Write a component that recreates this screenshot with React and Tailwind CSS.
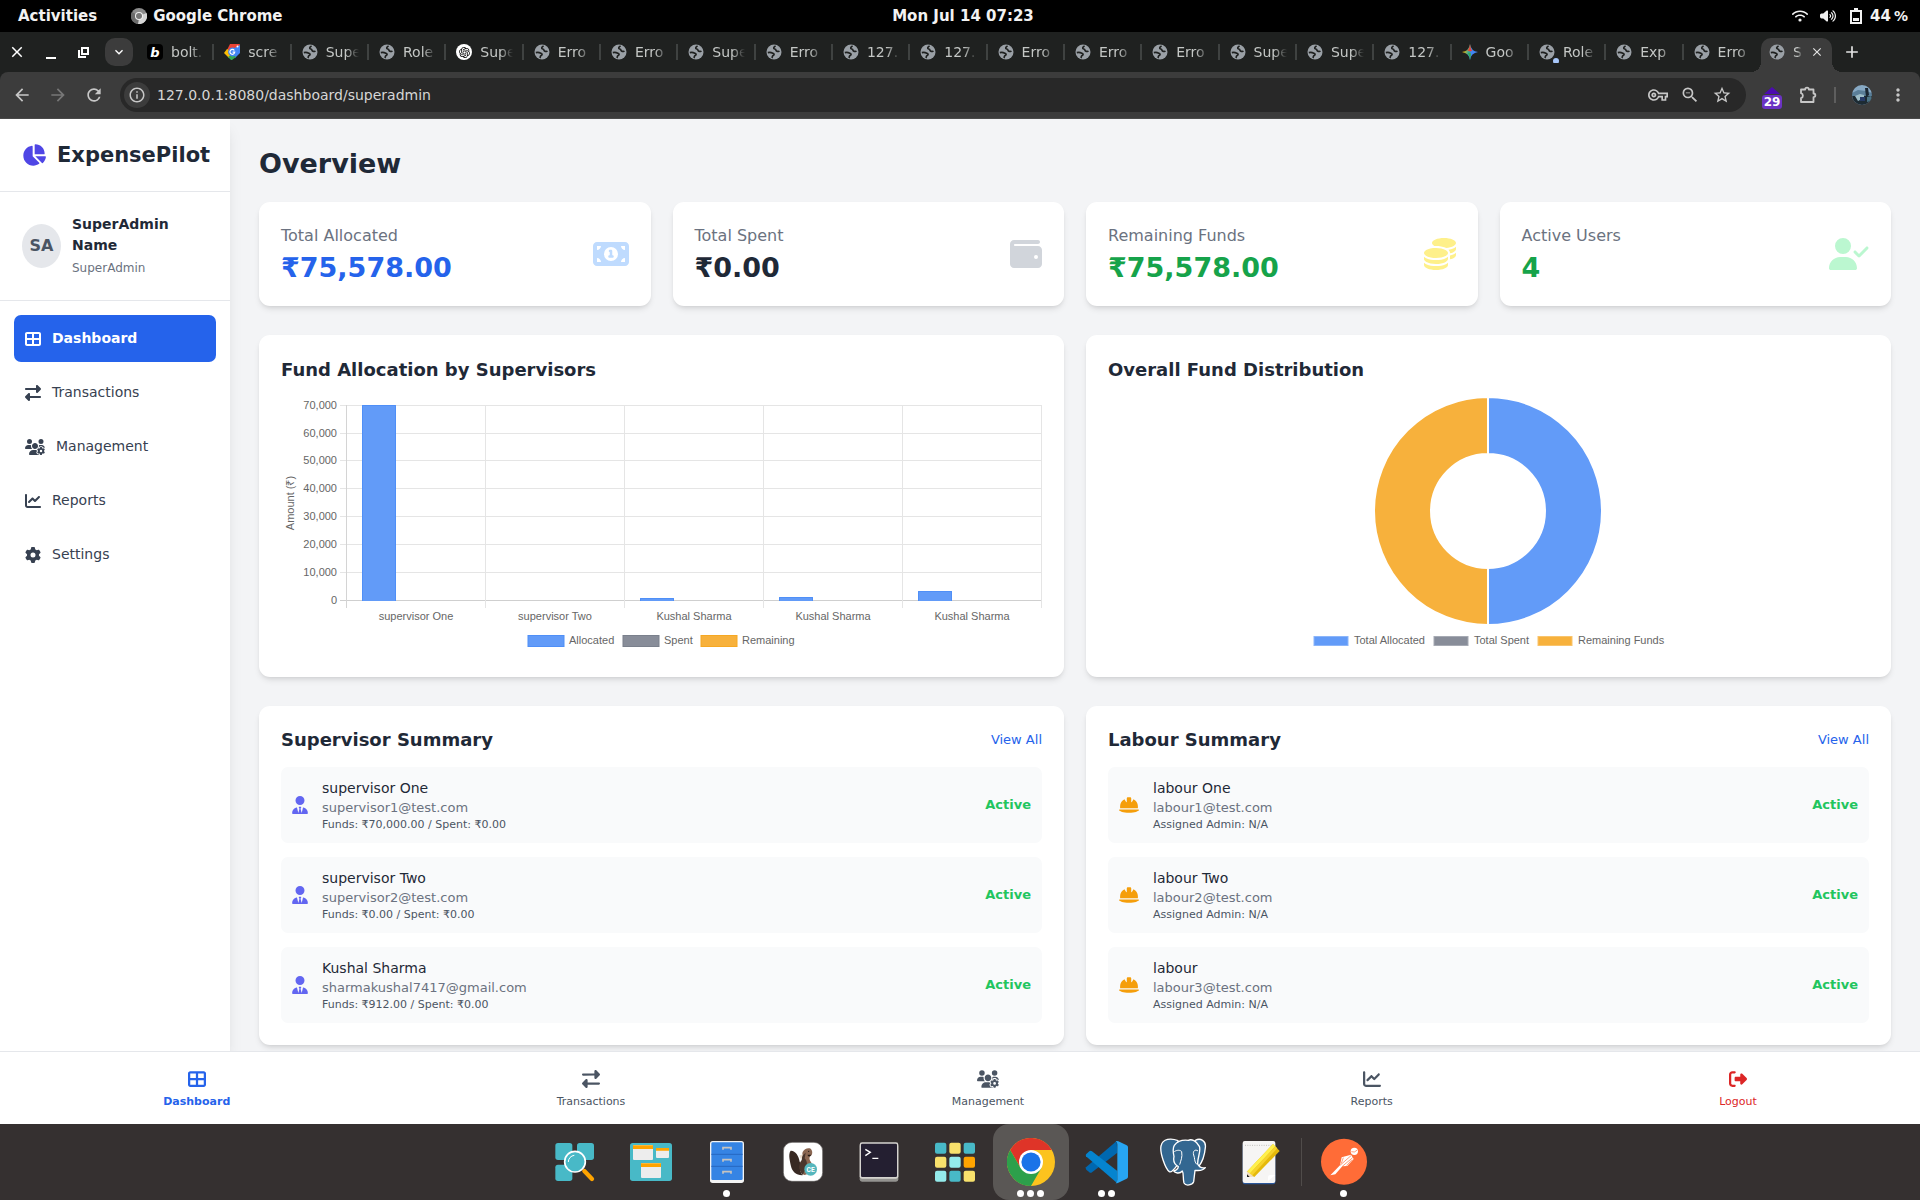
import React from "react";
import {
  FaChartLine,
  FaChartPie,
  FaCoins,
  FaGear,
  FaHelmetSafety,
  FaMoneyBill1,
  FaRightFromBracket,
  FaRightLeft,
  FaTableCellsLarge,
  FaUserCheck,
  FaUserTie,
  FaUsersGear,
  FaVolumeHigh,
  FaWallet,
  FaWifi,
} from "react-icons/fa6";
import {
  MdAdd,
  MdArrowBack,
  MdArrowForward,
  MdClose,
  MdExpandMore,
  MdMoreVert,
  MdOutlineInfo,
  MdOutlineVpnKey,
  MdRefresh,
  MdStarOutline,
  MdZoomOut,
} from "react-icons/md";
import { RiOpenaiFill } from "react-icons/ri";

/* ---------- Desktop top bar ---------- */

function TopBar() {
  return (
    <header className="grid h-8 shrink-0 grid-cols-3 items-center bg-black pl-[18px] pr-3 text-[15px] font-bold text-[#f2f2f2]">
      <div className="flex items-center gap-[34px]">
        <button>Activities</button>
        <button className="flex items-center gap-[6px]">
          <svg viewBox="0 0 16 16" className="size-4">
            <circle cx="8" cy="8" r="8" fill="#8c8c8c" />
            <path d="M8 8 L15.5 5 A8 8 0 0 1 7 16 Z" fill="#d6d6d6" />
            <path d="M8 8 L7 16 A8 8 0 0 1 1 4 Z" fill="#6b6b6b" />
            <circle cx="8" cy="8" r="4" fill="#f2f2f2" />
            <circle cx="8" cy="8" r="3" fill="#777" />
          </svg>
          Google Chrome
        </button>
      </div>
      <button className="justify-self-center">Mon Jul 14 07:23</button>
      <button className="flex items-center justify-self-end">
        <FaWifi className="mr-3 h-[14px] w-4" />
        <FaVolumeHigh className="mr-[14px] h-[14px] w-4" />
        <svg viewBox="0 0 12 16" className="mr-2 h-4 w-3">
          <path d="M4 0h4v2h4v14H0V2h4zM2 4v10h8V4z" fill="currentColor" fillRule="evenodd" />
          <rect x="3" y="10" width="6" height="3" fill="currentColor" />
        </svg>
        44
        <span className="ml-[3px] text-[14px]">%</span>
      </button>
    </header>
  );
}

/* ---------- Browser tabs ---------- */

function Favicon({ kind }) {
  if (kind === "bolt")
    return (
      <span className="flex size-4 shrink-0 items-center justify-center rounded bg-black text-[13px] font-bold italic leading-none text-white">
        b
      </span>
    );
  if (kind === "google")
    return (
      <svg viewBox="0 0 16 16" className="size-4 shrink-0">
        <path d="M6 0H15a1 1 0 0 1 1 1L13 6H3z" fill="#ea4335" />
        <path d="M3 5L0 9l5 5 3-6z" fill="#fbbc04" />
        <path d="M16 1V9l-5 5-4-8z" fill="#4285f4" />
        <path d="M4 13l4-3 4 3-4 3H7z" fill="#34a853" />
        <circle cx="8.500" cy="8" r="4.400" fill="#4285f4" />
        <circle cx="13.500" cy="2.500" r="1" fill="#fff" />
        <path d="M10.300 6.500A2.400 2.400 0 1 0 10.700 8.200H8.600" fill="none" stroke="#fff" strokeWidth="1.200" />
      </svg>
    );
  if (kind === "openai")
    return (
      <span className="flex size-4 shrink-0 items-center justify-center rounded-full bg-white">
        <RiOpenaiFill className="size-[13px] text-black" />
      </span>
    );
  if (kind === "gemini")
    return (
      <svg viewBox="0 0 16 16" className="size-4 shrink-0">
        <defs>
          <linearGradient id="gemini" x1="0.1" y1="0.4" x2="0.9" y2="0.6">
            <stop offset="0" stopColor="#fbbc04" />
            <stop offset="0.4" stopColor="#34a8a0" />
            <stop offset="0.6" stopColor="#4285f4" />
            <stop offset="1" stopColor="#4285f4" />
          </linearGradient>
        </defs>
        <path d="M8 0Q9 7 16 8Q9 9 8 16Q7 9 0 8Q7 7 8 0z" fill="url(#gemini)" />
        <path d="M8 0Q9 7 10.500 6.500L8 7.500L5.500 6.500Q7.400 5 8 0z" fill="#ea4335" />
        <path d="M8 16Q7 9 5.500 9.500L8 8.500L9 10z" fill="#34a853" />
      </svg>
    );
  return (
    <span className="relative size-4 shrink-0">
      <svg viewBox="0 0 16 16" className="size-4">
        <circle cx="8" cy="8" r="7.500" fill="#9aa0a6" />
        <path
          d="M1.800 8.600C4.200 8 5.200 8.200 6.400 9.200C8.600 9.600 8.600 11.200 6.800 11.800C6.200 12.400 6.400 13.400 5.800 14"
          fill="none"
          stroke="#1f2120"
          strokeWidth="1.700"
        />
        <path
          d="M9.600 2C7.600 3 7 4.400 8.800 5C10.400 5.400 9.600 6.800 10.800 7.200C12 7.600 12.800 7 13.400 7.800"
          fill="none"
          stroke="#1f2120"
          strokeWidth="1.700"
        />
      </svg>
      {kind === "dot" && <span className="absolute -bottom-1 -right-1 size-[6px] rounded-full bg-[#a8c7fa]" />}
    </span>
  );
}

const tabs = [
  ["bolt.", "bolt"],
  ["scre", "google"],
  ["Supe"],
  ["Role"],
  ["Supe", "openai"],
  ["Erro"],
  ["Erro"],
  ["Supe"],
  ["Erro"],
  ["127."],
  ["127."],
  ["Erro"],
  ["Erro"],
  ["Erro"],
  ["Supe"],
  ["Supe"],
  ["127."],
  ["Goo", "gemini"],
  ["Role", "dot"],
  ["Exp", "globe"],
  ["Erro"],
];

function TabStrip() {
  return (
    <div className="flex h-10 shrink-0 items-center bg-[#1f2120] text-[14px] text-[#c4c7c5]">
      <div className="flex w-[137px] shrink-0 items-center text-white">
        <button aria-label="Close window" className="ml-2">
          <MdClose className="size-[18px]" />
        </button>
        <button aria-label="Minimize" className="ml-5 h-[14px] w-[10px] border-b-2 border-white" />
        <button aria-label="Restore" className="ml-[22px]">
          <svg viewBox="0 0 11 11" className="size-[11px]" fill="none" stroke="currentColor" strokeWidth="2">
            <path d="M4 1h6v6H4z" />
            <path d="M1 3v7h7" />
          </svg>
        </button>
        <button
          aria-label="Search tabs"
          className="ml-4 flex h-7 w-7 items-center justify-center rounded-[10px] bg-[#3c3c3c]"
        >
          <MdExpandMore className="size-4" />
        </button>
      </div>
      <div className="flex min-w-0 flex-1">
        {tabs.map(([name, kind], i) => (
          <button key={i} className="flex min-w-0 flex-1 items-center overflow-hidden pl-[10px]">
            <Favicon kind={kind} />
            <span className="ml-2 w-9 whitespace-nowrap text-left [mask-image:linear-gradient(to_right,black_55%,transparent_92%)]">
              {name}
            </span>
            {i < tabs.length - 1 && <span className="ml-auto h-4 w-[2px] bg-[#3f4241]" />}
          </button>
        ))}
      </div>
      <div className="relative flex h-[34px] w-[71px] shrink-0 items-center self-end rounded-t-[10px] bg-[#3c3c3c] pb-[6px] pl-2 before:absolute before:-left-[10px] before:bottom-0 before:size-[10px] before:bg-[radial-gradient(circle_at_0_0,transparent_10px,#3c3c3c_10px)] after:absolute after:-right-[10px] after:bottom-0 after:size-[10px] after:bg-[radial-gradient(circle_at_100%_0,transparent_10px,#3c3c3c_10px)]">
        <Favicon />
        <span className="ml-2 w-[9px] [mask-image:linear-gradient(to_right,black_50%,transparent)]">S</span>
        <button aria-label="Close tab" className="ml-2 text-[#e3e3e3]">
          <MdClose className="size-[14px]" />
        </button>
      </div>
      <div className="w-[88px] shrink-0 pl-[10px]">
        <button aria-label="New tab" className="flex text-[#e3e3e3]">
          <MdAdd className="size-5" />
        </button>
      </div>
    </div>
  );
}

function Toolbar() {
  return (
    <div className="shrink-0 bg-[#1f2120]">
      <div className="flex h-[47px] items-center rounded-t-[8px] border-b border-[#4a4a4a] bg-[#3c3c3c] px-3 text-[#c7c7c7]">
        <button aria-label="Back">
          <MdArrowBack className="size-5" />
        </button>
        <button aria-label="Forward" className="ml-4 text-[#777]">
          <MdArrowForward className="size-5" />
        </button>
        <button aria-label="Reload" className="ml-4">
          <MdRefresh className="size-5" />
        </button>
        <div className="ml-4 flex h-[34px] min-w-0 flex-1 items-center rounded-full bg-[#282828] pl-1 pr-[14px]">
          <button aria-label="Site information" className="flex size-[26px] items-center justify-center rounded-full bg-[#3c3c3c]">
            <MdOutlineInfo className="size-[18px]" />
          </button>
          <input
            aria-label="Address"
            defaultValue="127.0.0.1:8080/dashboard/superadmin"
            className="ml-[7px] min-w-0 flex-1 bg-transparent text-[14px] text-[#d6d6d6] outline-none"
          />
          <div className="flex items-center gap-3">
            <button aria-label="Passwords">
              <MdOutlineVpnKey className="size-5" />
            </button>
            <button aria-label="Zoom">
              <MdZoomOut className="size-5" />
            </button>
            <button aria-label="Bookmark">
              <MdStarOutline className="size-5" />
            </button>
          </div>
        </div>
        <button aria-label="Extension" className="ml-4 flex w-5 flex-col items-center">
          <svg viewBox="0 0 16 7" className="mt-[6px] h-[7px] w-4">
            <path d="M8 0l8 7H0z" fill="#4c0bb0" />
          </svg>
          <span className="mt-px flex h-[14px] w-5 items-center justify-center rounded-[3px] bg-[#6b33c4] text-[12px] font-bold text-white">
            29
          </span>
        </button>
        <button aria-label="Extensions" className="ml-4">
          <svg viewBox="0 0 20 20" className="size-5" fill="none" stroke="currentColor" strokeWidth="1.800" strokeLinejoin="round">
            <path d="M3 4.500H7.200A1.800 1.800 0 0 1 10.800 4.500H15.500V8.500A1.800 1.800 0 0 1 15.500 12.200V17H3V13.200A2.600 2.600 0 0 0 3 8.200Z" />
          </svg>
        </button>
        <span className="ml-4 h-4 w-[2px] bg-[#5e5e5e]" />
        <button aria-label="Profile" className="ml-4">
          <svg viewBox="0 0 20 20" className="size-5">
            <defs>
              <clipPath id="avatar">
                <circle cx="10" cy="10" r="10" />
              </clipPath>
            </defs>
            <g clipPath="url(#avatar)">
              <rect width="20" height="20" fill="#87a9c4" />
              <rect y="8" width="20" height="12" fill="#1d2b33" />
              <path d="M0 8l6-3 8 1 6 2v3H0z" fill="#5b7f99" />
              <path d="M3 11l5-2 4 1v3l-6 3z" fill="#9dbdc8" />
              <path d="M8 12h5v4H8z" fill="#263a66" />
              <path d="M13 3h3l1 7-3 2z" fill="#1b2733" />
              <path d="M15 12l4-1v5l-4 1z" fill="#4c7486" />
            </g>
          </svg>
        </button>
        <button aria-label="Menu" className="ml-4 flex">
          <MdMoreVert className="size-5" />
        </button>
      </div>
    </div>
  );
}

/* ---------- Sidebar ---------- */

const navItems = [
  ["Dashboard", FaTableCellsLarge, "w-4"],
  ["Transactions", FaRightLeft, "w-4"],
  ["Management", FaUsersGear, "w-5"],
  ["Reports", FaChartLine, "w-4"],
  ["Settings", FaGear, "w-4"],
];

function Sidebar() {
  return (
    <aside className="z-10 w-[230px] shrink-0 bg-white shadow-lg">
      <div className="flex items-center gap-[11px] border-b border-[#e5e7eb] py-[22px] pl-[22px]">
        <FaChartPie className="h-[22px] w-6 text-[#4f46e5]" />
        <span className="text-[21px] font-bold leading-7">ExpensePilot</span>
      </div>
      <div className="flex items-center gap-[11px] border-b border-[#e5e7eb] p-[22px]">
        <div className="flex h-11 w-[39px] shrink-0 items-center justify-center rounded-[50%] bg-[#e5e7eb] text-[16px] font-bold text-[#4b5563]">
          SA
        </div>
        <div>
          <p className="text-[14px] font-bold leading-[21px]">SuperAdmin Name</p>
          <p className="mt-[2px] text-[12px] leading-5 text-[#6b7280]">SuperAdmin</p>
        </div>
      </div>
      <nav className="flex flex-col gap-[7px] p-[14px]">
        {navItems.map(([name, Icon, width], i) => (
          <a
            key={name}
            href="#"
            className={
              i === 0
                ? "flex h-[47px] items-center gap-[11px] rounded-[7px] bg-[#2563eb] px-[11px] text-[14px] font-bold text-white"
                : "flex h-[47px] items-center gap-[11px] rounded-[7px] px-[11px] text-[14px] text-[#374151]"
            }
          >
            <Icon className={`h-4 ${width}`} />
            {name}
          </a>
        ))}
      </nav>
    </aside>
  );
}

/* ---------- Overview content ---------- */

const stats = [
  ["Total Allocated", "₹75,578.00", "text-[#2563eb]", "w-9 text-[#bfdbfe]", FaMoneyBill1],
  ["Total Spent", "₹0.00", "text-[#1f2937]", "w-8 text-[#d1d5db]", FaWallet],
  ["Remaining Funds", "₹75,578.00", "text-[#16a34a]", "w-8 text-[#fef08a]", FaCoins],
  ["Active Users", "4", "text-[#16a34a]", "w-10 text-[#bbf7d0]", FaUserCheck],
];

function Card({ className = "", children }) {
  return <section className={`rounded-[11px] bg-white p-[22px] shadow-md ${className}`}>{children}</section>;
}

const bars = [70000, 0, 912, 1166, 3500];
const barNames = ["supervisor One", "supervisor Two", "Kushal Sharma", "Kushal Sharma", "Kushal Sharma"];
const ticks = [0, 1, 2, 3, 4, 5, 6, 7];

function LegendItem({ x, textX, width, height, fill, stroke, children }) {
  return (
    <g>
      <rect x={x} y={245 - height / 2} width={width} height={height} fill={fill} stroke={stroke} />
      <text x={textX} y="248">
        {children}
      </text>
    </g>
  );
}

function BarChart() {
  return (
    <svg
      viewBox="0 0 761 259"
      role="img"
      aria-label="Fund allocation by supervisors"
      className="block w-full fill-[#666] font-['Liberation_Sans',Arial,sans-serif] text-[11px]"
    >
      {ticks.map((t) => {
        const y = 204 - Math.round(t * 27.9) + 0.5;
        return (
          <g key={t}>
            <path d={`M59 ${y}H760`} stroke={t === 0 ? "#cfcfcf" : "#e5e5e5"} />
            <text x="56" y={y + 3} textAnchor="end">
              {t === 0 ? "0" : `${t}0,000`}
            </text>
          </g>
        );
      })}
      {[0, 1, 2, 3, 4, 5].map((i) => (
        <path key={i} d={`M${65.5 + i * 139} 9V212`} stroke={i === 0 ? "#d4d4d4" : "#e5e5e5"} />
      ))}
      {bars.map((v, i) => {
        const h = Math.floor((v / 70000) * 195.5);
        const x = 81 + i * 139;
        return (
          <g key={i}>
            {v > 0 && (
              <>
                <rect x={x} y={204 - h} width="34" height={h + 1} fill="#629bf8" />
                <path d={`M${x + 0.5} 205V${204.5 - h}H${x + 33.5}V205`} fill="none" stroke="#4f8ff7" />
              </>
            )}
            <text x={135 + i * 139} y="224" textAnchor="middle">
              {barNames[i]}
            </text>
          </g>
        );
      })}
      <text transform="translate(13 107) rotate(-90)" textAnchor="middle">
        Amount (₹)
      </text>
      <LegendItem x={247} textX={288} width={36} height={11} fill="#629bf8" stroke="#4f8ff7">
        Allocated
      </LegendItem>
      <LegendItem x={342} textX={383} width={36} height={11} fill="#888d99" stroke="#7a808c">
        Spent
      </LegendItem>
      <LegendItem x={420} textX={461} width={36} height={11} fill="#f7b13c" stroke="#f6a823">
        Remaining
      </LegendItem>
    </svg>
  );
}

function Doughnut() {
  return (
    <svg
      viewBox="0 0 761 259"
      role="img"
      aria-label="Overall fund distribution"
      className="block w-full fill-[#666] font-['Liberation_Sans',Arial,sans-serif] text-[11px]"
    >
      <g stroke="#fff" strokeWidth="2">
        <path d="M380 1A114 114 0 0 1 380 229V172A57 57 0 0 0 380 58Z" fill="#629bf8" />
        <path d="M380 1A114 114 0 0 0 380 229V172A57 57 0 0 1 380 58Z" fill="#f7b13c" />
      </g>
      <LegendItem x={206} textX={246} width={34} height={9} fill="#629bf8" stroke="#8bb5fa">
        Total Allocated
      </LegendItem>
      <LegendItem x={326} textX={366} width={34} height={9} fill="#888d99" stroke="#a6aab3">
        Total Spent
      </LegendItem>
      <LegendItem x={430} textX={470} width={34} height={9} fill="#f7b13c" stroke="#f9c46c">
        Remaining Funds
      </LegendItem>
    </svg>
  );
}

const supervisors = [
  ["supervisor One", "supervisor1@test.com", "Funds: ₹70,000.00 / Spent: ₹0.00"],
  ["supervisor Two", "supervisor2@test.com", "Funds: ₹0.00 / Spent: ₹0.00"],
  ["Kushal Sharma", "sharmakushal7417@gmail.com", "Funds: ₹912.00 / Spent: ₹0.00"],
];
const labourers = [
  ["labour One", "labour1@test.com", "Assigned Admin: N/A"],
  ["labour Two", "labour2@test.com", "Assigned Admin: N/A"],
  ["labour", "labour3@test.com", "Assigned Admin: N/A"],
];

function Summary({ title, people, Icon, iconStyle }) {
  return (
    <Card>
      <div className="mb-[15px] flex h-6 items-center justify-between">
        <h2 className="text-[18px] font-bold leading-6">{title}</h2>
        <a href="#" className="text-[13px] leading-6 text-[#2563eb]">
          View All
        </a>
      </div>
      <ul className="flex flex-col gap-[14px]">
        {people.map(([name, email, meta]) => (
          <li key={email} className="flex items-center gap-[14px] rounded-[7px] bg-[#f9fafb] p-[11px]">
            <Icon className={`h-[18px] ${iconStyle}`} />
            <div className="flex-1">
              <p className="text-[14px] leading-5">{name}</p>
              <p className="text-[13px] leading-5 text-[#6b7280]">{email}</p>
              <p className="text-[11px] leading-[14px] text-[#4b5563]">{meta}</p>
            </div>
            <span className="text-[13px] font-bold text-[#22c55e]">Active</span>
          </li>
        ))}
      </ul>
    </Card>
  );
}

function Overview() {
  return (
    <main className="min-w-0 flex-1 overflow-y-auto px-[29px] pt-[29px]">
      <h1 className="mb-[22px] text-[27px] font-bold leading-8">Overview</h1>
      <div className="mb-[29px] grid grid-cols-4 gap-[22px]">
        {stats.map(([label, value, color, iconStyle, Icon]) => (
          <Card key={label} className="flex items-center justify-between">
            <div>
              <p className="mb-1 text-[16px] leading-6 text-[#6b7280]">{label}</p>
              <p className={`text-[27px] font-bold leading-8 ${color}`}>{value}</p>
            </div>
            <Icon className={`h-8 ${iconStyle}`} />
          </Card>
        ))}
      </div>
      <div className="mb-[29px] grid grid-cols-2 gap-[22px]">
        <Card>
          <h2 className="mb-[14px] text-[18px] font-bold leading-[25px]">Fund Allocation by Supervisors</h2>
          <BarChart />
        </Card>
        <Card>
          <h2 className="mb-[14px] text-[18px] font-bold leading-[25px]">Overall Fund Distribution</h2>
          <Doughnut />
        </Card>
      </div>
      <div className="grid grid-cols-2 gap-[22px]">
        <Summary title="Supervisor Summary" people={supervisors} Icon={FaUserTie} iconStyle="w-4 text-[#6366f1]" />
        <Summary title="Labour Summary" people={labourers} Icon={FaHelmetSafety} iconStyle="w-5 text-[#f59e0b]" />
      </div>
    </main>
  );
}

const bottomItems = [
  ["Dashboard", FaTableCellsLarge, "w-[18px]", "font-bold text-[#2563eb]"],
  ["Transactions", FaRightLeft, "w-[18px]", "text-[#4b5563]"],
  ["Management", FaUsersGear, "w-[22px]", "text-[#4b5563]"],
  ["Reports", FaChartLine, "w-[18px]", "text-[#4b5563]"],
  ["Logout", FaRightFromBracket, "w-[18px]", "text-[#dc2626]"],
];

function BottomNav() {
  return (
    <nav className="z-20 flex h-[73px] shrink-0 items-center justify-around border-t border-[#e5e7eb] bg-white pt-1">
      {bottomItems.map(([name, Icon, width, tone]) => (
        <a key={name} href="#" className={`flex flex-col items-center gap-[6px] text-[11px] leading-4 ${tone}`}>
          <Icon className={`h-[18px] ${width}`} />
          {name}
        </a>
      ))}
    </nav>
  );
}

/* ---------- Dock ---------- */

const SearchApp = () => (
  <svg viewBox="33 69 144 144" className="size-12">
    <g fill="#48b9c7">
      <rect x="46" y="84" width="51" height="51" rx="8" />
      <rect x="111" y="84" width="51" height="51" rx="8" />
      <rect x="46" y="149" width="51" height="49" rx="8" />
    </g>
    <path d="M133 168l23 24" stroke="#ffa400" strokeWidth="13" strokeLinecap="round" />
    <circle cx="105" cy="140" r="31" fill="#48b9c7" stroke="#fff" strokeWidth="5" />
    <path d="M85 141a20 20 0 0 1 18-20" fill="none" stroke="#fff" strokeWidth="3" />
  </svg>
);

const Workspaces = () => (
  <svg viewBox="261 69 144 144" className="size-12">
    <rect x="270" y="84" width="126" height="114" rx="8" fill="#48b9c7" />
    <g fill="#ededed">
      <rect x="279" y="90" width="60" height="45" rx="3" />
      <rect x="348" y="99" width="39" height="30" rx="3" />
      <rect x="303" y="144" width="60" height="45" rx="3" />
    </g>
    <path d="M279 91h60v11h-60zM348 99h39v8h-39zM303 145h60v11h-60z" fill="#ffa400" />
  </svg>
);

const Files = () => (
  <svg viewBox="489 69 144 144" className="size-12">
    <rect x="510" y="78" width="102" height="126" rx="8" fill="#f3f3f3" />
    <rect x="514" y="82" width="94" height="113" rx="4" fill="#3584e4" />
    <path d="M514 118h94M514 154h94" stroke="#2668c0" strokeWidth="3" />
    <path d="M549 104v-6h24v6M549 140v-6h24v6M549 176v-6h24v6" fill="none" stroke="#c6c3bf" strokeWidth="5" />
  </svg>
);

const DBeaver = () => (
  <svg viewBox="717 69 144 144" className="size-12">
    <rect x="730" y="82" width="118" height="117" rx="26" fill="#fff" stroke="#5b5654" strokeWidth="2" />
    <path d="M752 107C766 106 776 122 779 140L784 150C778 158 780 170 788 181C770 182 756 170 753 154C751 141 743 118 752 107Z" fill="#382923" />
    <path d="M788 111C792 103 801 98 809 100C818 103 819 118 813 122C806 126 808 134 813 141C820 151 813 177 794 180C776 176 777 149 785 137C791 128 785 119 788 111Z" fill="#8a6651" />
    <path d="M787 122L797 113L794 130C803 139 803 153 795 165L788 180C774 163 776 145 785 136Z" fill="#4a362d" />
    <path d="M778 122L788 118L784 134Z" fill="#e9dac9" />
    <circle cx="806" cy="109" r="2" fill="#201813" />
    <path d="M803 119h11l-4 5h-6z" fill="#201813" />
    <circle cx="812" cy="163" r="19" fill="#55b6bd" />
    <text x="812" y="170" textAnchor="middle" fill="#fff" className="font-['Roboto',sans-serif] text-[20px] font-bold">
      CE
    </text>
  </svg>
);

const Terminal = () => (
  <svg viewBox="945 69 144 144" className="size-12">
    <rect x="959" y="86" width="116" height="114" rx="7" fill="#949390" />
    <rect x="959" y="82" width="116" height="109" rx="7" fill="#d5d3cf" />
    <rect x="963" y="86" width="108" height="100" rx="4" fill="#241f31" />
    <path d="M976 103l15 9-15 10M997 130h18" fill="none" stroke="#fff" strokeWidth="4" />
  </svg>
);

const gridColors = ["#48b9c7", "#f8e16c", "#48b9c7", "#f8e16c", "#94ebeb", "#ffa400", "#94ebeb", "#48b9c7", "#f8e16c"];
const AppGrid = () => (
  <svg viewBox="1173 69 144 144" className="size-12">
    {gridColors.map((c, i) => (
      <rect key={i} x={1185 + (i % 3) * 43} y={83 + Math.floor(i / 3) * 42} width="34" height="33" rx="6" fill={c} />
    ))}
  </svg>
);

const Chrome = () => (
  <svg viewBox="0 0 48 48" className="size-12">
    <circle cx="24" cy="24" r="24" fill="#fcc31e" />
    <path d="M3.200 12A24 24 0 0 1 44.800 12H24L13.600 30Z" fill="#df3428" />
    <path d="M3.200 12A24 24 0 0 0 24 48L34.400 30H13.600Z" fill="#2da04b" />
    <circle cx="24" cy="24" r="12" fill="#fff" />
    <circle cx="24" cy="24" r="9.600" fill="#1a73e8" />
  </svg>
);

const VSCode = () => (
  <svg viewBox="339 69 144 144" className="size-12">
    <path d="M440 78L348 157Q346 161 349 164L358 172Q362 175 366 172L442 113Z" fill="#0068b0" />
    <path d="M442 205L348 124Q346 120 349 117L358 109Q362 106 366 109L442 168Z" fill="#0584cf" />
    <path d="M437 205Q442 201 442 194V88Q442 81 437 78Q441 77 445 79L470 91Q474 93 474 97V185Q474 189 470 191L445 203Q441 205 437 205Z" fill="#27a5f2" />
  </svg>
);

const Postgres = () => (
  <svg viewBox="567 69 144 144" className="size-12">
    <g fill="#336791" stroke="#fff" strokeWidth="4" strokeLinejoin="round">
      <path d="M676 76C691 68 709 77 706 98C704 120 696 142 686 155L672 155Z" />
      <path d="M624 77C604 69 578 70 573 93C569 113 586 162 598 170C606 174 616 158 622 150Z" />
      <path d="M613 91C625 75 647 75 655 76C664 71 680 78 688 94C694 108 682 127 683 147C688 158 696 160 706 158C698 169 684 167 675 166L671 200C668 211 647 214 642 204C638 191 642 176 637 168C629 178 614 174 611 168C619 166 624 163 625 155C613 148 609 138 612 125C609 111 607 100 613 91Z" />
      <path d="M613 110C621 104 632 105 635 110C638 127 632 137 629 149M684 108C677 102 667 107 671 120C675 129 672 139 680 148" fill="none" strokeWidth="3" />
    </g>
  </svg>
);

const Notes = () => (
  <svg viewBox="795 69 144 144" className="size-12">
    <rect x="818" y="84" width="98" height="124" rx="6" fill="#2a5699" />
    <rect x="818" y="78" width="98" height="126" rx="6" fill="#f6f5f4" />
    <path d="M825 91h86" stroke="#c0bfbc" strokeWidth="3" strokeDasharray="3 4" />
    <path d="M894 198V187Q894 180 901 180H916Z" fill="#fff" />
    <path d="M832 169L909 87L929 108L853 186L831 186Z" fill="#e5b90b" />
    <path d="M832 169L909 87L916 94L839 176Z" fill="#fff04d" />
    <path d="M839 176L916 94L922 100L846 182Z" fill="#f6d32d" />
    <path d="M831 169L853 186H831Z" fill="#f1dfc0" />
    <path d="M831 178L839 186H831Z" fill="#222" />
  </svg>
);

const Postman = () => (
  <svg viewBox="1050 69 144 144" className="size-12">
    <circle cx="1122" cy="140" r="69" fill="#ff6c37" />
    <circle cx="1153" cy="109" r="11" fill="#fff" />
    <path d="M1144 110L1153 111L1162 105" fill="none" stroke="#ff6c37" strokeWidth="2" />
    <path d="M1143 119L1115 127L1110 151L1081 181L1096 178L1117 154L1132 153L1151 132Z" fill="#fff" />
    <path d="M1143 122L1110 151M1148 128L1117 154M1120 128L1114 145M1130 152L1146 134" stroke="#ff6c37" strokeWidth="2" />
  </svg>
);

const dockApps = [
  ["Search", SearchApp, 0],
  ["Workspaces", Workspaces, 0],
  ["Files", Files, 1],
  ["DBeaver", DBeaver, 0],
  ["Terminal", Terminal, 0],
  ["Applications", AppGrid, 0],
  ["Chrome", Chrome, 3],
  ["Code", VSCode, 2],
  ["pgAdmin", Postgres, 0],
  ["Text Editor", Notes, 0],
  ["Postman", Postman, 1],
];

function Dock() {
  return (
    <footer className="flex h-[76px] shrink-0 items-center justify-center bg-[#353030] pr-[2px]">
      {dockApps.map(([name, Icon, dots]) => (
        <React.Fragment key={name}>
          {name === "Postman" && <span className="mx-1 h-12 w-px bg-[#504c4a]" />}
          <button
            aria-label={name}
            className={
              name === "Chrome"
                ? "relative flex size-[76px] items-center justify-center rounded-2xl bg-[#5a5755]"
                : "relative flex size-[76px] items-center justify-center"
            }
          >
            <Icon />
            <span className="absolute inset-x-0 bottom-[3px] flex justify-center gap-[3px]">
              {Array.from({ length: dots }, (_, i) => (
                <span key={i} className="size-[7px] rounded-full bg-white" />
              ))}
            </span>
          </button>
        </React.Fragment>
      ))}
    </footer>
  );
}

export default function App() {
  return (
    <div className="flex h-screen flex-col overflow-hidden bg-[#f3f4f6] font-['DejaVu_Sans',sans-serif] text-[#1f2937]">
      <TopBar />
      <TabStrip />
      <Toolbar />
      <div className="flex min-h-0 flex-1">
        <Sidebar />
        <Overview />
      </div>
      <BottomNav />
      <Dock />
    </div>
  );
}
